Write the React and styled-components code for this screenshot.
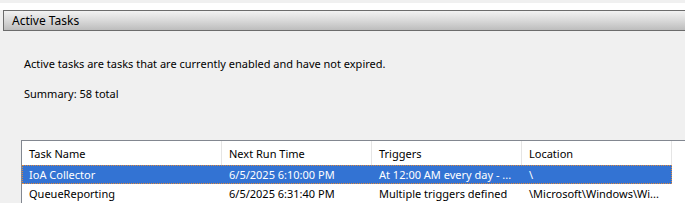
import React from 'react';
import styled, { createGlobalStyle, css } from 'styled-components';

const Global = createGlobalStyle`
  html, body {
    margin: 0;
    padding: 0;
    background: #f0f0f0;
    overflow: hidden;
  }
  body {
    font-family: "Noto Sans", "Open Sans", sans-serif;
    font-size: 11px;
    color: #000;
  }
`

const Page = styled.div`
  width: 685px;
  height: 203px;
  display: flex;
  flex-direction: column;
  background: #f0f0f0;
`

const TopGap = styled.div`
  height: 8px;
  margin-top: 3px;
  background: #fff;
`

const SectionBar = styled.div`
  height: 23px;
  margin-left: 3px;
  padding-left: 8px;
  display: flex;
  align-items: center;
  border: 1px solid #6c6c6c;
  border-right: none;
  background: linear-gradient(to bottom, #f2f2f2 0%, #dcdcdc 45%, #bdbdbd 100%);
  font-size: 12px;
`

const Body = styled.div`
  flex: 1;
  padding: 24px 0 0 24px;
  display: flex;
  flex-direction: column;
`

const Line = styled.div`
  height: 18px;
  line-height: 18px;
  margin-bottom: ${p => p.gap || 0}px;
`

const List = styled.div`
  margin-left: -3px;
  margin-top: 37px;
  flex: 1;
  background: #fff;
  border-top: 1px solid #828790;
  border-left: 1px solid #828790;
`

const Row = styled.div`
  display: grid;
  grid-template-columns: 200px 150px 150px 150px;
  height: ${p => p.h || 19}px;
  align-items: center;
  ${p => p.selected && css`
    width: 650px;
    background: #3373d3;
    color: #fff;
    outline: 1px dotted #e08a3c;
    outline-offset: -1px;
  `}
`

const HeadCell = styled.div`
  height: 100%;
  display: flex;
  align-items: center;
  padding-left: 7px;
  border-right: 1px solid #e5e5e5;
`

const Cell = styled.div`
  padding-left: 7px;
  white-space: nowrap;
  overflow: hidden;
`

const columns = ['Task Name', 'Next Run Time', 'Triggers', 'Location'];

const tasks = [
  ['IoA Collector', '6/5/2025 6:10:00 PM', 'At 12:00 AM every day - ...', '\\'],
  ['QueueReporting', '6/5/2025 6:31:40 PM', 'Multiple triggers defined', '\\Microsoft\\Windows\\Wi...'],
];

export default function App() {
  return (
    <Page>
      <Global />
      <TopGap />
      <SectionBar>Active Tasks</SectionBar>
      <Body>
        <Line gap={12}>Active tasks are tasks that are currently enabled and have not expired.</Line>
        <Line>Summary: 58 total</Line>
        <List>
          <Row h={24}>
            {columns.map(c => <HeadCell key={c}>{c}</HeadCell>)}
          </Row>
          {tasks.map((t, i) => (
            <Row key={t[0]} selected={i === 0}>
              {t.map((v, j) => <Cell key={j}>{v}</Cell>)}
            </Row>
          ))}
        </List>
      </Body>
    </Page>
  );
}
